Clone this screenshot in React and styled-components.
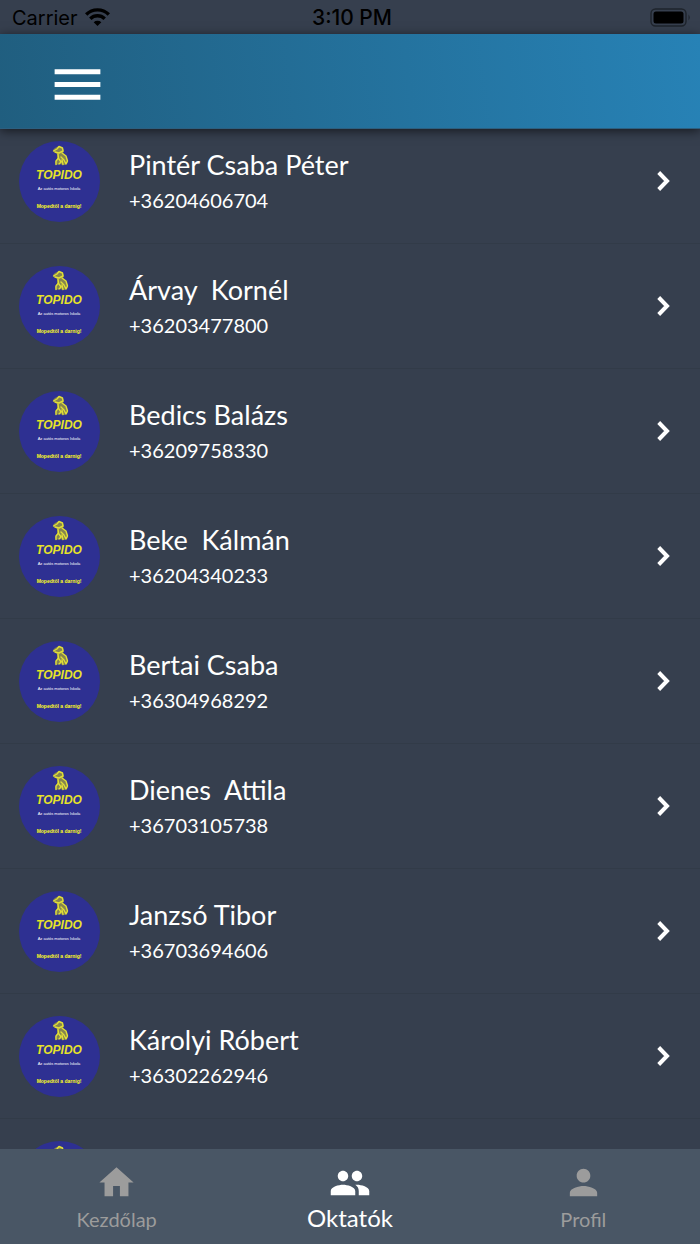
import styled, { createGlobalStyle } from "styled-components";
import { MdHome, MdMenu, MdPeople, MdPerson } from "react-icons/md";

const GlobalStyle = createGlobalStyle`
  * {
    box-sizing: border-box;
  }
  body {
    margin: 0;
    background: #363f4e;
    font-family: Lato, "Noto Sans", sans-serif;
  }
`;

const Screen = styled.div`
  display: flex;
  flex-direction: column;
  height: 100vh;
  overflow: hidden;
`;

const StatusBar = styled.div`
  display: grid;
  grid-template-columns: 1fr auto 1fr;
  align-items: center;
  flex: none;
  height: 34px;
  padding: 2px 8px 0 12px;
  color: #000;
  font-family: Inter, "Liberation Sans", sans-serif;
  font-size: 20px;
  line-height: 24px;
`;

const Carrier = styled.div`
  display: flex;
  align-items: center;
  gap: 7px;
`;

const Clock = styled.time`
  font-size: 21px;
  font-weight: 500;
`;

const BatteryIcon = styled.svg`
  justify-self: end;
`;

const Header = styled.header`
  z-index: 1;
  display: flex;
  align-items: center;
  flex: none;
  height: 95px;
  padding: 6px 47px 0;
  background: linear-gradient(83deg, #205e7f, #2782b6);
  border-bottom: 1px solid #2c5f80;
  box-shadow: 0 2px 10px rgba(0, 0, 0, 0.6);
`;

const MenuButton = styled.button`
  display: flex;
  padding: 0;
  border: 0;
  background: none;
  color: #fff;
  font-size: 61px;
`;

const List = styled.ul`
  flex: 1;
  min-height: 0;
  margin: -10px 0 0;
  padding: 0;
  overflow: hidden;
  list-style: none;
`;

const Row = styled.a`
  display: flex;
  align-items: center;
  height: 125px;
  padding: 0 17px 0 19px;
  border-bottom: 1px solid #323b48;
  color: #fff;
  text-decoration: none;
`;

const Chevron = styled.svg`
  flex: none;
  width: 40px;
  height: 40px;
  fill: none;
  stroke: #fff;
  stroke-width: 4;
`;

const Avatar = styled.svg`
  flex: none;
  width: 81px;
  height: 81px;
  margin-right: 29px;
  font-family: "Liberation Sans", Arial, sans-serif;
  text-anchor: middle;
`;

const Info = styled.div`
  flex: 1;
  min-width: 0;
  padding-top: 2px;
`;

const Name = styled.div`
  font-size: 27px;
  line-height: 36px;
  white-space: pre;
`;

const Phone = styled.div`
  font-size: 20px;
  line-height: 34px;
`;

const TabBar = styled.nav`
  z-index: 1;
  display: grid;
  grid-template-columns: repeat(3, 1fr);
  flex: none;
  height: 95px;
  background: #495665;
`;

const Tab = styled.a`
  display: flex;
  flex-direction: column;
  align-items: center;
  padding-top: 13px;
  color: ${props => props.$active ? "#fff" : "#9c9c9c"};
  font-size: ${props => props.$active ? "24px" : "20px"};
  line-height: ${props => props.$active ? "28px" : "32px"};
  text-decoration: none;
  svg {
    font-size: ${props => props.$active ? "42px" : "41px"};
  }
`;

const instructors = [
  { name: "Pintér Csaba Péter", phone: "+36204606704" },
  { name: "Árvay  Kornél", phone: "+36203477800" },
  { name: "Bedics Balázs", phone: "+36209758330" },
  { name: "Beke  Kálmán", phone: "+36204340233" },
  { name: "Bertai Csaba", phone: "+36304968292" },
  { name: "Dienes  Attila", phone: "+36703105738" },
  { name: "Janzsó Tibor", phone: "+36703694606" },
  { name: "Károlyi Róbert", phone: "+36302262946" },
];

const tabs = [
  { label: "Kezdőlap", icon: MdHome },
  { label: "Oktatók", icon: MdPeople, active: true },
  { label: "Profil", icon: MdPerson },
];

const SchoolLogo = ({ children }) => (
  <Avatar viewBox="0 0 81 81" aria-hidden="true">
    <circle cx="40.5" cy="40.5" r="40.5" fill="#2e3092" />
    <path d="M36 7 L40 5 L44 7 L45 10 L44 12 L47 15 L49 20 L48 23 L45 24 L40 23 L37 24 L36 21 L38 18 L38 13 L35 11 L34 9 Z" fill="#85844f" />
    <g fill="none" stroke="#e0de38" strokeWidth="1.4" strokeLinecap="round" strokeLinejoin="round">
      <path d="M34.5 10 L38 8 L40 5.5 L43.5 7 L44 10 L40 12 L36 11" />
      <path d="M43 12 L47 15 L48.5 20 L47 23 L45 19 L42 16" />
      <path d="M39 13 L39.500 17 L37 20 L37 23.500 M40 18 L42 21 L40 23 M43 19 L44 23.500" />
    </g>
    {children}
  </Avatar>
);

const SchoolText = () => (
  <>
    <text x="40" y="38" fontSize="12" fontWeight="700" fontStyle="italic" fill="#e6e22a">TOPIDO</text>
    <text x="40" y="49" fontSize="4" fill="#fff">Az autós motoros Iskola</text>
    <text x="40" y="67" fontSize="5" fontWeight="700" fill="#ffff1c">Mopedtől a darnig!</text>
  </>
);

const App = () => {
  return (
    <>
      <GlobalStyle />
      <Screen>
        <StatusBar>
          <Carrier>
            Carrier
            <svg width="26" height="20" viewBox="0 0 26 20" aria-hidden="true">
              <g fill="none" stroke="#000" strokeWidth="3.4">
                <path d="M1.200 6.500 A16 16 0 0 1 23.800 6.500" />
                <path d="M5.300 10.700 A10.200 10.200 0 0 1 19.700 10.700" />
              </g>
              <path d="M12.500 18 L8.700 14.200 A5.600 5.600 0 0 1 16.300 14.200 Z" />
            </svg>
          </Carrier>
          <Clock>3:10 PM</Clock>
          <BatteryIcon width="42" height="20" viewBox="0 0 42 20" aria-hidden="true">
            <rect x="1" y="1" width="35" height="17" rx="4.5" fill="none" stroke="#1e242c" strokeWidth="1.4" />
            <rect x="3.5" y="3.5" width="30" height="12" rx="2.5" />
            <path d="M38.5 6.5 Q41 9.5 38.5 12.5 Z" fill="#1e242c" />
          </BatteryIcon>
        </StatusBar>
        <Header>
          <MenuButton type="button" aria-label="Menü">
            <MdMenu />
          </MenuButton>
        </Header>
        <List>
          {instructors.map(({ name, phone }) => (
            <li key={phone}>
              <Row href={`tel:${phone}`}>
                <SchoolLogo>
                  <SchoolText />
                </SchoolLogo>
                <Info>
                  <Name>{name}</Name>
                  <Phone>{phone}</Phone>
                </Info>
                <Chevron viewBox="0 0 40 40" aria-hidden="true">
                  <path d="M15.700 11.500 L24 20 L15.700 28.500" />
                </Chevron>
              </Row>
            </li>
          ))}
          {/* placeholder for the next entry */}
          <li>
            <Row as="div">
              <SchoolLogo />
            </Row>
          </li>
        </List>
        <TabBar>
          {tabs.map(({ label, icon: Icon, active }) => (
            <Tab key={label} href="#" $active={active}>
              <Icon />
              {label}
            </Tab>
          ))}
        </TabBar>
      </Screen>
    </>
  );
};

export default App;
